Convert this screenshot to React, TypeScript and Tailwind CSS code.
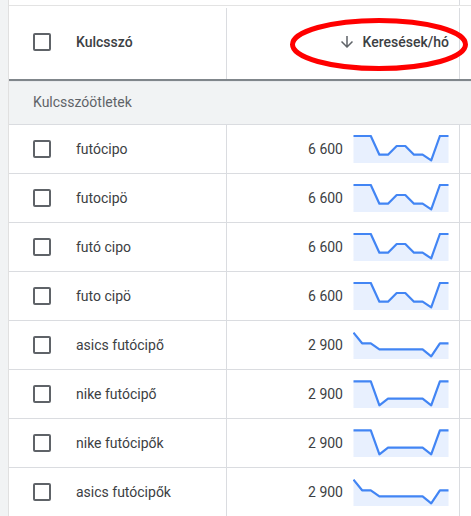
import React from "react";

type Row = { keyword: string; volume: string; trend: number[] };

// y values of the 12 monthly points inside a 96x28 sparkline box
const flatDip = [1, 1, 1, 19.7, 19.7, 11, 11, 19.7, 19.7, 25.3, 1, 1];
const slide = [1.7, 12.3, 12.3, 18.3, 18.3, 18.3, 18.3, 18.3, 18.3, 25.3, 12.3, 12.3];
const deepDip = [1.3, 1.3, 1.3, 25.3, 18.7, 18.7, 18.7, 18.7, 18.7, 25.3, 1.3, 1.3];

const rows: Row[] = [
  { keyword: "futócipo", volume: "6 600", trend: flatDip },
  { keyword: "futocipö", volume: "6 600", trend: flatDip },
  { keyword: "futó cipo", volume: "6 600", trend: flatDip },
  { keyword: "futo cipö", volume: "6 600", trend: flatDip },
  { keyword: "asics futócipő", volume: "2 900", trend: slide },
  { keyword: "nike futócipő", volume: "2 900", trend: deepDip },
  { keyword: "nike futócipők", volume: "2 900", trend: deepDip },
  { keyword: "asics futócipők", volume: "2 900", trend: slide },
];

function Checkbox() {
  return <div className="w-[18px] h-[18px] shrink-0 rounded-[2px] border-2 border-[#5f6368]" />;
}

function Sparkline({ trend }: { trend: number[] }) {
  const step = 95 / (trend.length - 1);
  const pts = trend.map((y, i) => `${(i * step + 0.5).toFixed(1)},${y}`);
  const line = pts.join(" ");
  const area = `0.5,28 ${line} 95.5,28`;
  return (
    <svg width="96" height="28" viewBox="0 0 96 28" className="shrink-0">
      <polygon points={area} fill="#e8f0fe" />
      <polyline points={line} fill="none" stroke="#4285f4" strokeWidth="2.2" strokeLinejoin="round" />
    </svg>
  );
}

export default function App() {
  return (
    <div className="relative flex w-[471px] h-[516px] overflow-hidden bg-white font-['Roboto','Liberation_Sans',sans-serif]">
      <div className="w-[9px] shrink-0 bg-[#f1f3f4] border-r border-[#e0e0e0]" />
      <div className="flex-1 flex flex-col min-w-0">
        {/* row scrolled under the sticky header */}
        <div className="flex h-[5px] shrink-0">
          <div className="w-[451px] shrink-0 border-r border-[#dadce0]" />
          <div className="flex-1" />
        </div>
        <div className="h-[3px] shrink-0 overflow-hidden border-t border-[#e3e3e3]">
          <div className="-mt-[13px] pl-[24px] text-[14px] leading-[16px] text-[#eeeeee] whitespace-nowrap">
            Hozzáadás a kulcsszavakhoz
          </div>
        </div>
        <div className="flex h-[71px] shrink-0">
          <div className="w-[218px] shrink-0 flex items-center pl-[24px] pb-[3px] border-r border-[#dadce0]">
            <Checkbox />
            <span className="ml-[25px] text-[14px] font-medium text-[#3c4043]">Kulcsszó</span>
          </div>
          <div className="w-[233px] shrink-0 flex items-center justify-end gap-[7px] pr-[10px] pb-[3px] border-r border-[#dadce0]">
            <svg width="18" height="18" viewBox="0 0 24 24" fill="#5f6368">
              <path d="M20 12l-1.41-1.41L13 16.17V4h-2v12.17l-5.58-5.59L4 12l8 8 8-8z" />
            </svg>
            <span className="text-[14px] font-medium text-[#3c4043]">Keresések/hó</span>
          </div>
          <div className="flex-1" />
        </div>
        <div className="h-[2px] shrink-0 bg-[#80868b]" />
        <div className="h-[44px] shrink-0 flex items-center pl-[24px] pb-[2px] bg-[#f1f3f4] border-t border-[#e8eaed] border-b border-b-[#dadce0]">
          <span className="text-[14px] text-[#5f6368]">Kulcsszóötletek</span>
        </div>
        {rows.map((r) => (
          <div key={r.keyword} className="flex h-[49px] shrink-0 border-b border-[#dadce0]">
            <div className="w-[218px] shrink-0 flex items-center pl-[24px] border-r border-[#dadce0]">
              <Checkbox />
              <span className="ml-[25px] text-[14px] text-[#3c4043]">{r.keyword}</span>
            </div>
            <div className="w-[233px] shrink-0 flex items-center justify-end gap-[10px] pr-[10px] border-r border-[#dadce0]">
              <span className="text-[14px] text-[#3c4043]">{r.volume}</span>
              <Sparkline trend={r.trend} />
            </div>
            <div className="flex-1" />
          </div>
        ))}
      </div>
      <svg className="absolute left-0 top-0 pointer-events-none" width="471" height="100" viewBox="0 0 471 100">
        <ellipse cx="379" cy="44.5" rx="86.5" ry="24" fill="none" stroke="#ff0000" strokeWidth="5" />
      </svg>
    </div>
  );
}
